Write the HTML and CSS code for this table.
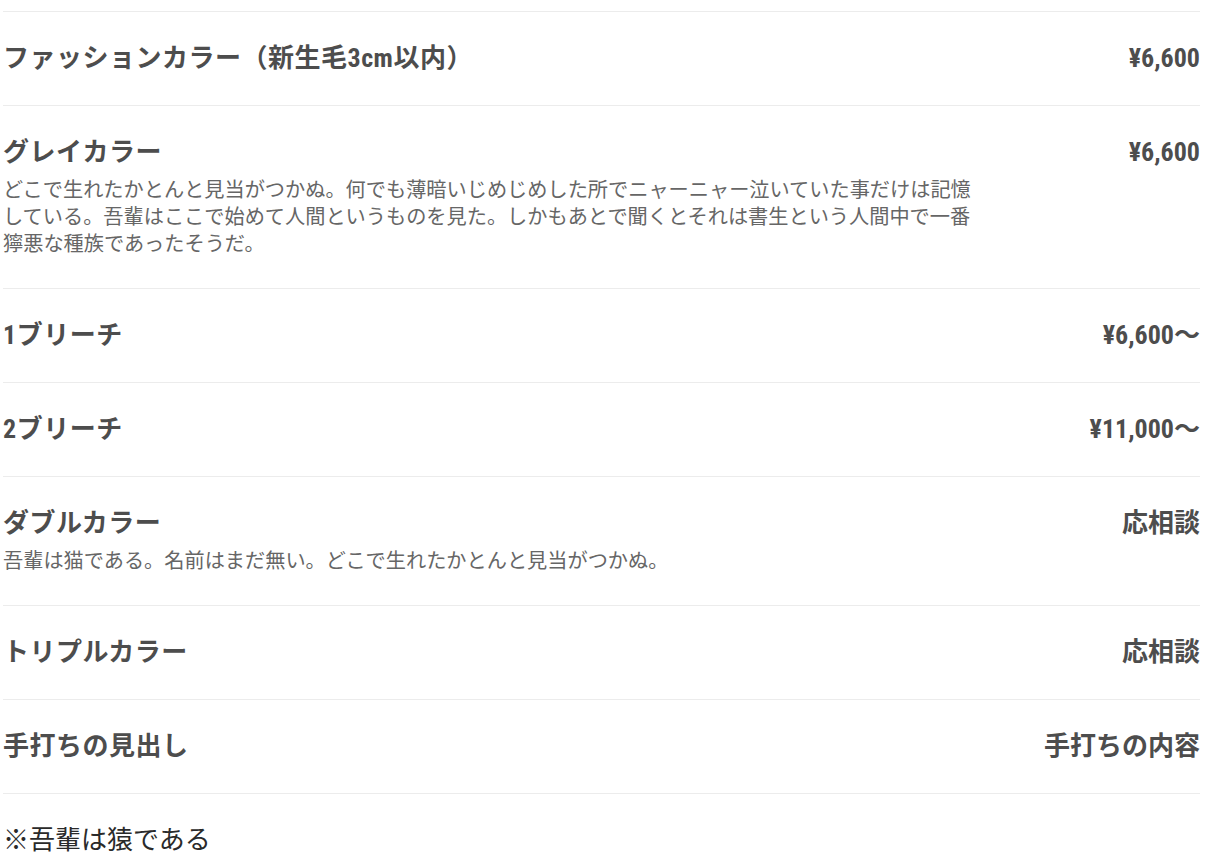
FILE: index.html
```html
<!DOCTYPE html>
<html lang="ja">
<head>
<meta charset="utf-8">
<title>Menu</title>
<link rel="stylesheet" href="styles.css">
</head>
<body>
<div class="page">
  <ul class="menu">
    <li class="item">
      <div class="head"><span class="name">ファッションカラー（新生毛3cm以内）</span><span class="price">¥6,600</span></div>
    </li>
    <li class="item">
      <div class="head"><span class="name">グレイカラー</span><span class="price">¥6,600</span></div>
      <p class="desc">どこで生れたかとんと見当がつかぬ。何でも薄暗いじめじめした所でニャーニャー泣いていた事だけは記憶している。吾輩はここで始めて人間というものを見た。しかもあとで聞くとそれは書生という人間中で一番獰悪な種族であったそうだ。</p>
    </li>
    <li class="item">
      <div class="head"><span class="name">1ブリーチ</span><span class="price">¥6,600〜</span></div>
    </li>
    <li class="item">
      <div class="head"><span class="name">2ブリーチ</span><span class="price">¥11,000〜</span></div>
    </li>
    <li class="item">
      <div class="head"><span class="name">ダブルカラー</span><span class="price">応相談</span></div>
      <p class="desc">吾輩は猫である。名前はまだ無い。どこで生れたかとんと見当がつかぬ。</p>
    </li>
    <li class="item">
      <div class="head"><span class="name">トリプルカラー</span><span class="price">応相談</span></div>
    </li>
    <li class="item">
      <div class="head"><span class="name">手打ちの見出し</span><span class="price">手打ちの内容</span></div>
    </li>
  </ul>
  <p class="note">※吾輩は猿である</p>
</div>
</body>
</html>
```

FILE: styles.css
```css
html, body {
  margin: 0;
  padding: 0;
  background: #ffffff;
}

body {
  font-family: "Roboto Condensed", "Noto Sans CJK JP", "Noto Sans", sans-serif;
  color: #333333;
}

.page {
  padding: 11px 8px 0 3px;
}

.menu {
  list-style: none;
  margin: 0;
  padding: 0;
  border-top: 1px solid #ececec;
}

.item {
  padding: 30px 0;
  border-bottom: 1px solid #ececec;
}

.head {
  display: flex;
  justify-content: space-between;
  align-items: center;
  gap: 20px;
}

.name,
.price {
  font-size: 26px;
  line-height: 33px;
  font-weight: 700;
  color: #4d4d4d;
  white-space: nowrap;
}

.name {
  letter-spacing: 0.5px;
}

.desc {
  margin: 8px 0 0;
  max-width: 980px;
  font-size: 20.2px;
  line-height: 27px;
  color: #666666;
}

.note {
  margin: 30px 0 0;
  font-size: 26px;
  line-height: 33px;
  color: #2a2a2a;
}
```
